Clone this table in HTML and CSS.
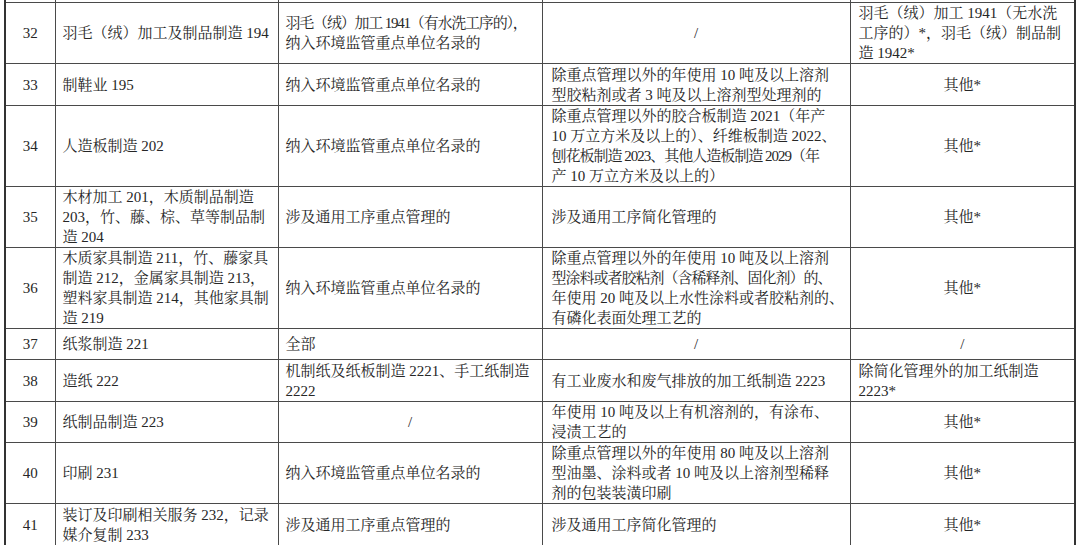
FILE: index.html
```html
<!DOCTYPE html>
<html lang="zh-CN">
<head>
<meta charset="utf-8">
<title>表</title>
<link rel="stylesheet" href="styles.css">
</head>
<body>
<table class="grid">
  <colgroup>
    <col class="c-no">
    <col class="c-name">
    <col class="c-key">
    <col class="c-simple">
    <col class="c-reg">
  </colgroup>
  <tbody>
    <tr class="r-top"><td></td><td></td><td></td><td></td><td></td></tr>
    <tr class="r59">
      <td class="num">32</td>
      <td>羽毛（绒）加工及制品制造 194</td>
      <td><span class="tight-2">羽毛（绒）加工 1941（有水洗工序的），</span><br>纳入环境监管重点单位名录的</td>
      <td class="mid">/</td>
      <td>羽毛（绒）加工 1941（无水洗<br>工序的）*，羽毛（绒）制品制<br>造 1942*</td>
    </tr>
    <tr class="r42">
      <td class="num">33</td>
      <td>制鞋业 195</td>
      <td>纳入环境监管重点单位名录的</td>
      <td>除重点管理以外的年使用 10 吨及以上溶剂<br>型胶粘剂或者 3 吨及以上溶剂型处理剂的</td>
      <td class="mid">其他*</td>
    </tr>
    <tr class="r81">
      <td class="num">34</td>
      <td>人造板制造 202</td>
      <td>纳入环境监管重点单位名录的</td>
      <td>除重点管理以外的胶合板制造 2021（年产<br>10 万立方米及以上的）、纤维板制造 2022、<br><span class="tight">刨花板制造 2023、其他人造板制造 2029（年</span><br>产 10 万立方米及以上的）</td>
      <td class="mid">其他*</td>
    </tr>
    <tr class="r61">
      <td class="num">35</td>
      <td>木材加工 201，木质制品制造<br>203，竹、藤、棕、草等制品制<br>造 204</td>
      <td>涉及通用工序重点管理的</td>
      <td>涉及通用工序简化管理的</td>
      <td class="mid">其他*</td>
    </tr>
    <tr class="r81">
      <td class="num">36</td>
      <td>木质家具制造 211，竹、藤家具<br>制造 212，金属家具制造 213，<br>塑料家具制造 214，其他家具制<br>造 219</td>
      <td>纳入环境监管重点单位名录的</td>
      <td>除重点管理以外的年使用 10 吨及以上溶剂<br><span class="tight">型涂料或者胶粘剂（含稀释剂、固化剂）的、</span><br>年使用 20 吨及以上水性涂料或者胶粘剂的、<br>有磷化表面处理工艺的</td>
      <td class="mid">其他*</td>
    </tr>
    <tr class="r31">
      <td class="num">37</td>
      <td>纸浆制造 221</td>
      <td>全部</td>
      <td class="mid">/</td>
      <td class="mid">/</td>
    </tr>
    <tr class="r42">
      <td class="num">38</td>
      <td>造纸 222</td>
      <td>机制纸及纸板制造 2221、手工纸制造<br>2222</td>
      <td>有工业废水和废气排放的加工纸制造 2223</td>
      <td>除简化管理外的加工纸制造<br>2223*</td>
    </tr>
    <tr class="r41">
      <td class="num">39</td>
      <td>纸制品制造 223</td>
      <td class="mid">/</td>
      <td>年使用 10 吨及以上有机溶剂的，有涂布、<br>浸渍工艺的</td>
      <td class="mid">其他*</td>
    </tr>
    <tr class="r60">
      <td class="num">40</td>
      <td>印刷 231</td>
      <td>纳入环境监管重点单位名录的</td>
      <td>除重点管理以外的年使用 80 吨及以上溶剂<br>型油墨、涂料或者 10 吨及以上溶剂型稀释<br>剂的包装装潢印刷</td>
      <td class="mid">其他*</td>
    </tr>
    <tr class="r42">
      <td class="num">41</td>
      <td>装订及印刷相关服务 232，记录<br>媒介复制 233</td>
      <td>涉及通用工序重点管理的</td>
      <td>涉及通用工序简化管理的</td>
      <td class="mid">其他*</td>
    </tr>
  </tbody>
</table>
</body>
</html>
```

FILE: styles.css
```css
html, body {
  margin: 0;
  padding: 0;
  background: #ffffff;
}

body {
  font-family: "Liberation Serif", "Noto Serif CJK SC", "Noto Sans CJK SC", serif;
  font-size: 15px;
  line-height: 20px;
  color: #262626;
}

.grid {
  margin-left: 4px;
  border-collapse: collapse;
  table-layout: fixed;
  width: 1071px;
}

.c-no { width: 50px; }
.c-name { width: 223px; }
.c-key { width: 264px; }
.c-simple { width: 308px; }
.c-reg { width: 225px; }

.grid td {
  border: 1px solid #4a4a4a;
  padding: 0 7px;
  vertical-align: middle;
  text-align: left;
  white-space: nowrap;
}

.grid td:first-child {
  border-left: 2px solid #333333;
}

.grid td:last-child {
  border-right: 2px solid #333333;
}

.grid td:nth-child(2) {
  border-left-color: #808080;
}

.grid td:nth-child(4) {
  padding-left: 9px;
}

.grid td:nth-child(5) {
  padding-left: 8px;
}

.grid td.num,
.grid td.mid {
  text-align: center;
  padding-left: 0;
  padding-right: 0;
}

.tight {
  letter-spacing: -1px;
}

.tight-2 {
  letter-spacing: -1.2px;
}

.r-top td {
  height: 2px;
  border-top: none;
  padding: 0;
}

.r31 td { height: 30px; }
.r41 td { height: 40px; }
.r42 td { height: 41px; }
.r59 td { height: 58px; }
.r60 td { height: 59px; }
.r61 td { height: 60px; }
.r81 td { height: 80px; }
```
